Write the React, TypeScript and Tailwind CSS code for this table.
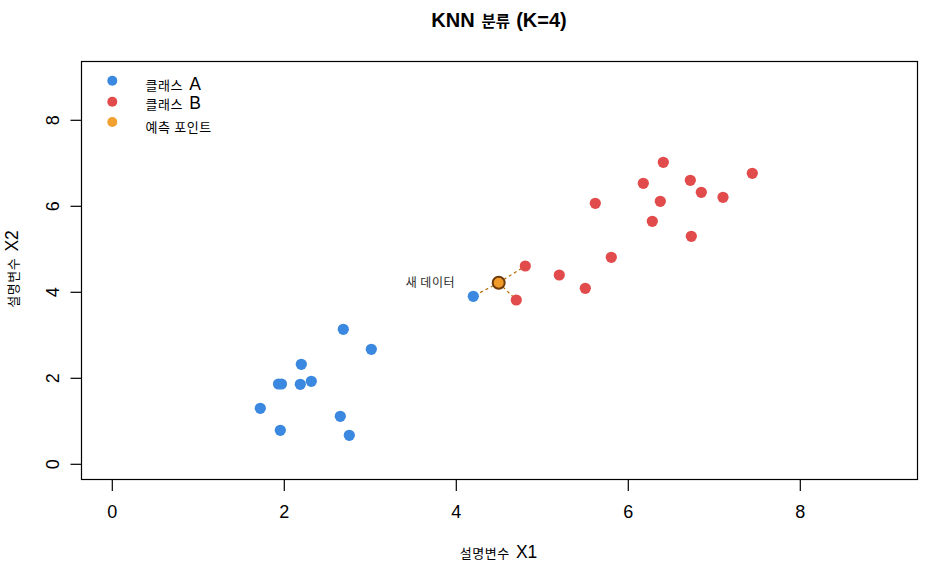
import React from 'react';

type Pt = [number, number];

// page pixel coordinates measured from the reference plot
const classA: Pt[] = [
  [343.3, 329.3], [371.3, 349.3], [301.3, 364.3], [278.5, 384], [281.5, 384],
  [300.3, 384.3], [311.3, 381.3], [260.3, 408.3], [340.3, 416.3], [280.3, 430.3],
  [349.3, 435.3], [473.3, 296.3],
];

const classB: Pt[] = [
  [663.3, 162.3], [752.3, 173.3], [643.3, 183.3], [690.3, 180.3], [701.3, 192.3],
  [723, 197.3], [595.3, 203.3], [660.3, 201.3], [652.3, 221.3], [691.3, 236.3],
  [611.3, 257.3], [559.3, 275], [585.3, 288.3], [525.3, 266], [516.3, 300],
];

const newPoint: Pt = [498.7, 282.7];
const neighbors: Pt[] = [[473.3, 296.3], [525.3, 266], [516.3, 300]];

const BLUE = '#3a88df';
const RED = '#e24b4b';
const ORANGE = '#f2a02f';

const latin = "'Liberation Sans', Arial, sans-serif";
const korean = "'Noto Sans CJK KR', 'Noto Sans', sans-serif";

const xTicks = [0, 2, 4, 6, 8];
const yTicks = [0, 2, 4, 6, 8];
const xPos = (v: number) => 112.3 + 86 * v;
const yPos = (v: number) => 464.3 - 43 * v;

// mixed label: Korean part is drawn smaller than the Latin part, like R's fallback font
const MixedLabel: React.FC<{ ko: string; en: string }> = ({ ko, en }) => (
  <>
    <tspan fontFamily={korean} fontSize={13} letterSpacing={0.6}>{ko}</tspan>
    <tspan dx={6} fontFamily={latin} fontSize={17.5}>{en}</tspan>
  </>
);

const App: React.FC = () => {
  return (
    <div className="flex h-[571px] w-[946px] flex-col overflow-hidden bg-white">
      <h1 className="flex h-[42px] items-start justify-center pl-[52px] pt-[9px] text-[20px] font-bold leading-[22px] text-black">
        <span className="font-['Liberation_Sans',Arial,sans-serif]">KNN</span>
        <span className="ml-[7px] font-['Noto_Sans_CJK_KR',sans-serif] text-[15.5px]">분류</span>
        <span className="ml-[6px] font-['Liberation_Sans',Arial,sans-serif]">(K=4)</span>
      </h1>
      <svg width={946} height={529} viewBox="0 42 946 529" className="block">
        {/* plot frame */}
        <rect x={81.5} y={61.5} width={836} height={418} fill="none" stroke="#000" strokeWidth={1.2} />

        {/* x axis */}
        {xTicks.map((t) => (
          <g key={`x${t}`}>
            <line x1={xPos(t)} y1={479.5} x2={xPos(t)} y2={491} stroke="#000" strokeWidth={1.2} />
            <text x={xPos(t)} y={517.5} textAnchor="middle" fontSize={18} fontFamily={latin} fill="#000">
              {t}
            </text>
          </g>
        ))}

        {/* y axis */}
        {yTicks.map((t) => (
          <g key={`y${t}`}>
            <line x1={70.5} y1={yPos(t)} x2={81.5} y2={yPos(t)} stroke="#000" strokeWidth={1.2} />
            <text
              transform={`translate(59 ${yPos(t)}) rotate(-90)`}
              textAnchor="middle"
              fontSize={18}
              fontFamily={latin}
              fill="#000"
            >
              {t}
            </text>
          </g>
        ))}

        {/* axis titles */}
        <text x={498.5} y={558.3} textAnchor="middle" fill="#000">
          <MixedLabel ko="설명변수" en="X1" />
        </text>
        <text transform="translate(17.5 269) rotate(-90)" textAnchor="middle" fill="#000">
          <MixedLabel ko="설명변수" en="X2" />
        </text>

        {/* neighbour links */}
        {neighbors.map(([x, y], i) => (
          <line
            key={`n${i}`}
            x1={newPoint[0]}
            y1={newPoint[1]}
            x2={x}
            y2={y}
            stroke="#b8730f"
            strokeWidth={1.3}
            strokeDasharray="3 3"
          />
        ))}

        {classA.map(([x, y], i) => (
          <circle key={`a${i}`} cx={x} cy={y} r={5.6} fill={BLUE} />
        ))}
        {classB.map(([x, y], i) => (
          <circle key={`b${i}`} cx={x} cy={y} r={5.6} fill={RED} />
        ))}

        <circle cx={newPoint[0]} cy={newPoint[1]} r={6} fill="#f09a2a" stroke="#6e3b0c" strokeWidth={2} />
        <text x={455} y={287} textAnchor="end" fontFamily={korean} fontSize={12} letterSpacing={0.5} fill="#2a2a2a">
          새 데이터
        </text>

        {/* legend */}
        <circle cx={112.3} cy={80.7} r={5} fill={BLUE} />
        <circle cx={112.3} cy={101.7} r={5} fill={RED} />
        <circle cx={112.3} cy={122} r={5} fill={ORANGE} />
        <text x={145.5} y={89.5} fill="#000">
          <MixedLabel ko="클래스" en="A" />
        </text>
        <text x={145.5} y={109} fill="#000">
          <MixedLabel ko="클래스" en="B" />
        </text>
        <text x={145.5} y={132} fontFamily={korean} fontSize={13} letterSpacing={0.6} fill="#000">
          예측 포인트
        </text>
      </svg>
    </div>
  );
};

export default App;
